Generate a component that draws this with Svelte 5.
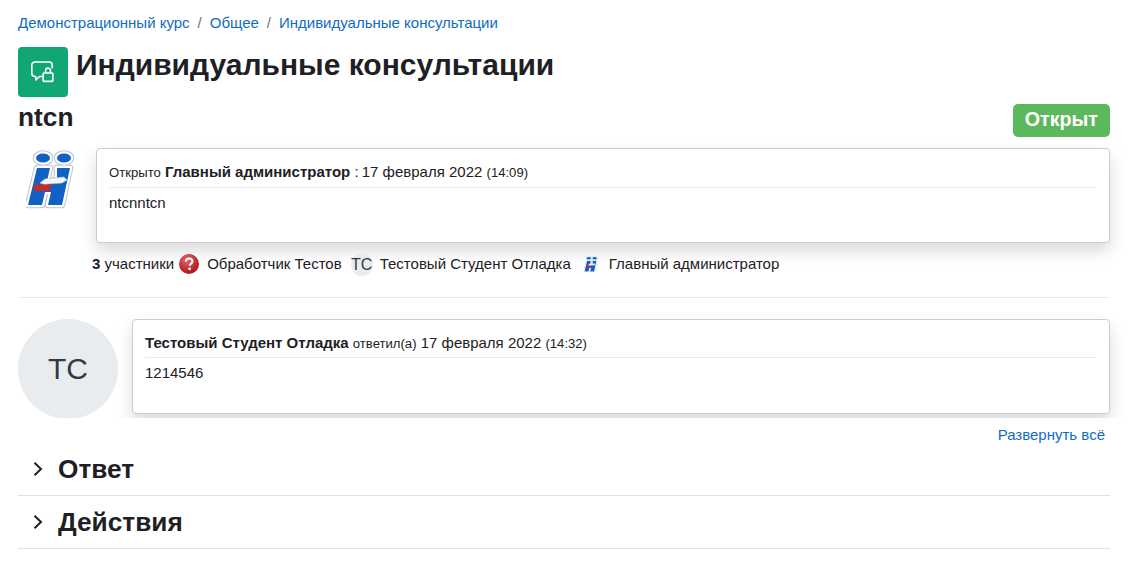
<script>
  const members = [
    { name: "Обработчик Тестов", kind: "help" },
    { name: "Тестовый Студент Отладка", kind: "initials" },
    { name: "Главный администратор", kind: "logo" }
  ];
  const sections = ["Ответ", "Действия"];
  const legs = "M11 18 L24 18 L21 31 L31 30 L31 18 L44 18 L36 55 L22 55 L25 42 L19 42 L16 55 L2 55 Z";
</script>

{#snippet logo(size)}
  <svg width={size} height={size * 1.2} viewBox="0 0 50 60" class="logo">
    <g fill="none" stroke="#bcc6d1" stroke-width="6.5" stroke-linejoin="round">
      <ellipse cx="17" cy="8" rx="7" ry="4.5" />
      <ellipse cx="38" cy="8" rx="7" ry="4.5" />
      <path d={legs} />
    </g>
    <g fill="#fff" stroke="#fff" stroke-width="4.5" stroke-linejoin="round">
      <ellipse cx="17" cy="8" rx="7" ry="4.5" />
      <ellipse cx="38" cy="8" rx="7" ry="4.5" />
      <path d={legs} />
    </g>
    <g fill="#1160c4">
      <ellipse cx="17" cy="8" rx="7" ry="4.5" />
      <ellipse cx="38" cy="8" rx="7" ry="4.5" />
      <path d={legs} />
    </g>
    <path d="M14 33 L19 29 L38 27 L41 30 L36 33 L22 34 L20 35 Z" fill="#f4f6f9" stroke="#b9c4d0" stroke-width="0.6" />
    <path d="M8 34.5 L25 34.5 L24 41 L8 41 Z" fill="#c22b2b" />
  </svg>
{/snippet}

<main class="page">
  <nav class="crumbs">
    <a href="#a">Демонстрационный курс</a>
    <span class="sep">/</span>
    <a href="#b">Общее</a>
    <span class="sep">/</span>
    <a href="#c">Индивидуальные консультации</a>
  </nav>

  <header class="title">
    <div class="modicon">
      <svg width="26" height="24" viewBox="0 0 26 24" fill="none" stroke="#fff" stroke-width="1.6">
        <path d="M13 16.5H9.5L5.8 20V16.5H5A3.2 3.2 0 0 1 1.8 13.3V5.2A3.2 3.2 0 0 1 5 2H19A3.2 3.2 0 0 1 22.2 5.2V8.5" stroke-linejoin="round" />
        <rect x="13.2" y="13" width="9.6" height="8.4" rx="0.8" />
        <path d="M15.6 13V10.5A2.4 2.4 0 0 1 20.4 10.5V13" />
      </svg>
    </div>
    <h2>Индивидуальные консультации</h2>
  </header>

  <div class="topic">
    <h3>ntcn</h3>
    <span class="badge">Открыт</span>
  </div>

  <section class="first">
    <div class="post-row">
      <div class="side-logo">{@render logo(50)}</div>
      <article class="card">
        <div class="meta">
          <small>Открыто</small> <strong>Главный администратор</strong> : <span class="date">17 февраля 2022</span> <small>(14:09)</small>
        </div>
        <div class="body">ntcnntcn</div>
      </article>
    </div>

    <div class="members">
      <span class="count"><strong>3</strong> участники</span>
      {#each members as m}
        <span class="member">
          {#if m.kind === "help"}
            <svg width="20" height="20" viewBox="0 0 20 20" class="mini">
              <defs>
                <radialGradient id="red" cx="40%" cy="30%" r="75%">
                  <stop offset="0" stop-color="#e8636a" />
                  <stop offset="1" stop-color="#a80f14" />
                </radialGradient>
              </defs>
              <circle cx="10" cy="10" r="10" fill="url(#red)" />
              <path d="M6.8 7.6C6.9 5.6 8.3 4.6 10.1 4.6C12 4.6 13.4 5.7 13.4 7.4C13.4 9.6 10.7 9.6 10.7 11.8" fill="none" stroke="#fff" stroke-width="2" />
              <circle cx="10.6" cy="14.8" r="1.4" fill="#fff" />
            </svg>
          {:else if m.kind === "initials"}
            <span class="mini-initials">ТС</span>
          {:else}
            <span class="mini-logo">{@render logo(14)}</span>
          {/if}
          {m.name}
        </span>
      {/each}
    </div>
  </section>

  <section class="reply">
    <div class="avatar">ТС</div>
    <article class="card">
      <div class="meta tight">
        <strong>Тестовый Студент Отладка</strong> <small>ответил(а)</small> 17 февраля 2022 <small>(14:32)</small>
      </div>
      <div class="body">1214546</div>
    </article>
  </section>

  <div class="expand"><a href="#d">Развернуть всё</a></div>

  {#each sections as s}
    <div class="fold">
      <svg width="10" height="14" viewBox="0 0 10 14" fill="none" stroke="#1d2125" stroke-width="2">
        <path d="M1.5 0.8L8 7L1.5 13.2" />
      </svg>
      <h3>{s}</h3>
    </div>
  {/each}
</main>

<style>
  :global(body) {
    margin: 0;
    background: #fff;
    color: #1d2125;
    font-family: "Liberation Sans", Arial, sans-serif;
    font-size: 15px;
    line-height: 1.5;
  }
  a {
    color: #0f6cbf;
    text-decoration: none;
  }
  .page {
    padding: 12px 26px 0 18px;
    height: 549px;
    overflow: hidden;
  }
  .crumbs {
    height: 23px;
    white-space: nowrap;
  }
  .sep {
    color: #6a737b;
    margin: 0 3.8px;
  }
  .title {
    display: flex;
    gap: 8px;
    margin-top: 12px;
    height: 50px;
  }
  .modicon {
    width: 50px;
    height: 50px;
    border-radius: 4px;
    background: #11a676;
    display: flex;
    align-items: center;
    justify-content: center;
  }
  h2 {
    margin: 0;
    font-size: 30px;
    line-height: 36px;
    font-weight: 700;
  }
  h3 {
    margin: 0;
    font-weight: 700;
    font-size: 26.25px;
    line-height: 30px;
  }
  .topic {
    display: flex;
    justify-content: space-between;
    align-items: flex-start;
    height: 46px;
    margin-top: 5px;
  }
  .badge {
    margin-top: 2px;
    background: #5cb85c;
    color: #fff;
    font-weight: 700;
    font-size: 19.69px;
    line-height: 30px;
    padding: 0 12px 3px;
    border-radius: 5px;
  }
  .first {
    border-bottom: 1px solid #e9ecef;
    height: 149px;
  }
  .post-row {
    display: flex;
    height: 95px;
  }
  .side-logo {
    width: 78px;
    padding: 2px 0 0 8px;
    box-sizing: border-box;
    flex: none;
  }
  .logo {
    display: block;
  }
  .card {
    flex: 1;
    box-sizing: border-box;
    border: 1px solid #c9ccd0;
    border-radius: 4px;
    background: #fff;
    padding: 12px 13px 12px 12px;
    box-shadow: 0 8px 16px rgba(0, 0, 0, 0.15);
    height: 95px;
  }
  .meta {
    border-bottom: 1px solid #e9ecef;
    height: 26px;
    line-height: 22px;
  }
  .meta.tight {
    height: 25px;
  }
  .date {
    margin-left: -1px;
  }
  small {
    font-size: 13.125px;
  }
  .body {
    margin-top: 4px;
  }
  .members {
    display: flex;
    align-items: center;
    margin-top: 7px;
    padding-left: 74px;
    height: 28px;
    gap: 9px;
    white-space: nowrap;
  }
  .member {
    display: flex;
    align-items: center;
    gap: 8px;
  }
  .count {
    margin-right: -4px;
  }
  .mini {
    flex: none;
  }
  .mini-initials {
    width: 22px;
    height: 22px;
    border-radius: 50%;
    background: #e9ecef;
    font-size: 16px;
    color: #343a40;
    padding-top: 1px;
    display: flex;
    align-items: center;
    justify-content: center;
    margin-right: -1px;
  }
  .mini-logo {
    margin: 0 3px 0 4px;
    display: block;
  }
  .reply {
    display: flex;
    gap: 14px;
    padding-top: 21px;
    height: 99px;
    overflow: hidden;
    margin-right: -26px;
    padding-right: 26px;
  }
  .avatar {
    width: 100px;
    height: 100px;
    border-radius: 50%;
    background: #e9ecef;
    flex: none;
    display: flex;
    align-items: center;
    justify-content: center;
    font-size: 30px;
    color: #343a40;
    box-sizing: border-box;
    padding-bottom: 2px;
  }
  .expand {
    text-align: right;
    padding-right: 5px;
    height: 25px;
    padding-top: 6px;
    box-sizing: border-box;
    font-size: 15px;
  }
  .fold {
    display: flex;
    align-items: center;
    gap: 15px;
    padding: 3px 0 3px 15px;
    height: 46px;
    border-bottom: 1px solid #dee2e6;
  }
</style>
